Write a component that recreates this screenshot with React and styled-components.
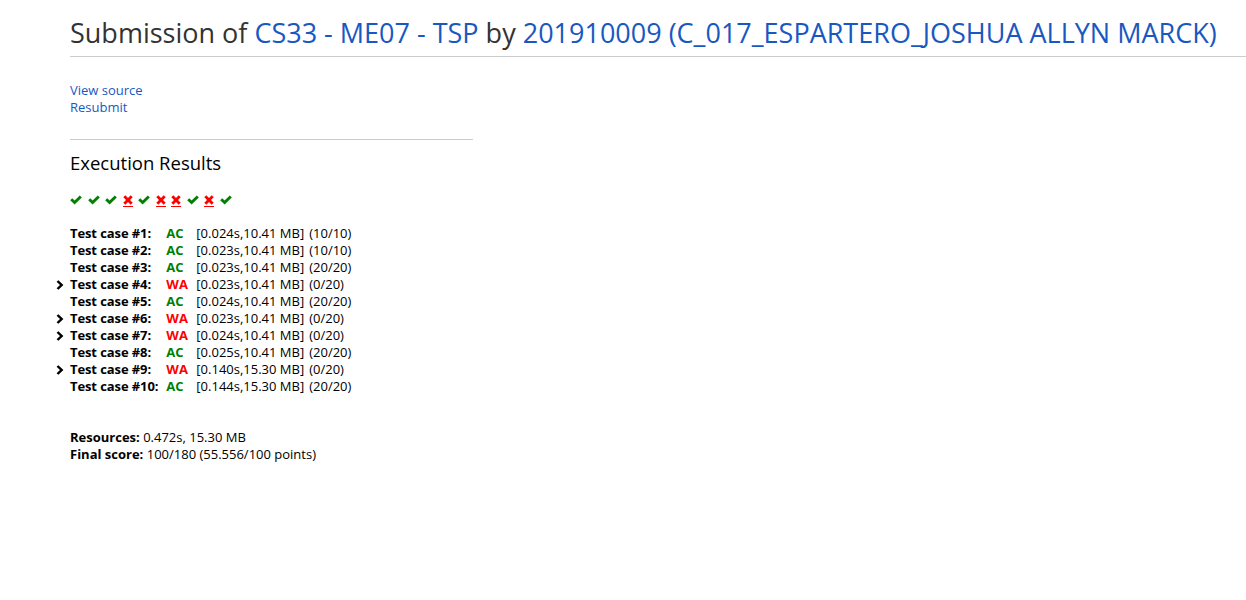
import React from "react";
import styled, { createGlobalStyle } from "styled-components";

const Global = createGlobalStyle`
  html, body { margin: 0; padding: 0; background: #fff; }
  body {
    font-family: "Open Sans", "Noto Sans", sans-serif;
    font-size: 13px;
    color: #000;
  }
  a { color: #1958c1; text-decoration: none; }
`;

const Page = styled.div`
  padding: 14px 0 80px 70px;
`;

const TitleBar = styled.h2`
  margin: 0;
  font-weight: 400;
  font-size: 27px;
  line-height: 38px;
  color: #333;
  padding-bottom: 4px;
  border-bottom: 1px solid #ccc;
  white-space: nowrap;
`;

const Links = styled.div`
  margin-top: 25px;
  display: flex;
  flex-direction: column;
  line-height: 17px;
  font-size: 13px;
`;

const Rule = styled.hr`
  width: 403px;
  margin: 23px 0 0 0;
  border: 0;
  border-top: 1px solid #ccc;
`;

const SectionTitle = styled.h3`
  margin: 10px 0 0 0;
  font-weight: 400;
  font-size: 18.5px;
  line-height: 26px;
  color: #000;
`;

const Marks = styled.div`
  margin-top: 17px;
  display: flex;
  gap: 5.5px;
  height: 16px;
  align-items: center;
`;

const MarkLink = styled.a`
  display: inline-flex;
  flex-direction: column;
  align-items: center;
  border-bottom: ${(p) => (p.$link ? "1px solid #f00" : "1px solid transparent")};
  padding-bottom: 1px;
`;

const Cases = styled.table`
  margin-top: 16px;
  border-collapse: collapse;
  line-height: 17px;
  td { padding: 0; white-space: nowrap; vertical-align: middle; }
`;

const Label = styled.td`
  font-weight: 700;
  letter-spacing: -0.1px;
  position: relative;
  padding-right: 8px !important;
`;

const Chevron = styled.span`
  position: absolute;
  left: -14px;
  top: 4px;
  display: inline-flex;
`;

const Verdict = styled.td`
  font-weight: 700;
  color: ${(p) => (p.$ok ? "#008000" : "#f00")};
  width: 30px;
`;

const Time = styled.td``;
const Mem = styled.td`
  padding-right: 5px !important;
`;

const Summary = styled.div`
  margin-top: 34px;
  line-height: 17px;
  b { font-weight: 700; }
`;

const Check = () => (
  <svg width="12" height="10" viewBox="0 0 12 10">
    <path d="M0.2 5.2 L2.2 3.2 L4.6 5.6 L9.8 0.4 L11.8 2.4 L4.6 9.6 Z" fill="#008000" />
  </svg>
);

const Cross = () => (
  <svg width="10" height="10" viewBox="0 0 10 10">
    <path
      d="M0.3 2.3 L2.3 0.3 L5 3 L7.7 0.3 L9.7 2.3 L7 5 L9.7 7.7 L7.7 9.7 L5 7 L2.3 9.7 L0.3 7.7 L3 5 Z"
      fill="#f00"
    />
  </svg>
);

const ChevronIcon = () => (
  <svg width="8" height="10" viewBox="0 0 8 10">
    <path d="M0.6 1.8 L2.4 0.2 L7.4 5 L2.4 9.8 L0.6 8.2 L4 5 Z" fill="#000" />
  </svg>
);

const cases = [
  { ok: true, t: "0.024s", m: "10.41 MB", p: "(10/10)" },
  { ok: true, t: "0.023s", m: "10.41 MB", p: "(10/10)" },
  { ok: true, t: "0.023s", m: "10.41 MB", p: "(20/20)" },
  { ok: false, t: "0.023s", m: "10.41 MB", p: "(0/20)" },
  { ok: true, t: "0.024s", m: "10.41 MB", p: "(20/20)" },
  { ok: false, t: "0.023s", m: "10.41 MB", p: "(0/20)" },
  { ok: false, t: "0.024s", m: "10.41 MB", p: "(0/20)" },
  { ok: true, t: "0.025s", m: "10.41 MB", p: "(20/20)" },
  { ok: false, t: "0.140s", m: "15.30 MB", p: "(0/20)" },
  { ok: true, t: "0.144s", m: "15.30 MB", p: "(20/20)" },
];

export default function App() {
  return (
    <>
      <Global />
      <Page>
        <TitleBar>
          Submission of <a href="#">CS33 - ME07 - TSP</a> by{" "}
          <a href="#">201910009 (C_017_ESPARTERO_JOSHUA ALLYN MARCK)</a>
        </TitleBar>
        <Links>
          <a href="#">View source</a>
          <a href="#">Resubmit</a>
        </Links>
        <Rule />
        <SectionTitle>Execution Results</SectionTitle>
        <Marks>
          {cases.map((c, i) => (
            <MarkLink key={i} $link={!c.ok} href="#">
              {c.ok ? <Check /> : <Cross />}
            </MarkLink>
          ))}
        </Marks>
        <Cases>
          <tbody>
            {cases.map((c, i) => (
              <tr key={i}>
                <Label>
                  {!c.ok && (
                    <Chevron>
                      <ChevronIcon />
                    </Chevron>
                  )}
                  Test case #{i + 1}:
                </Label>
                <Verdict $ok={c.ok}>{c.ok ? "AC" : "WA"}</Verdict>
                <Time>[{c.t},</Time>
                <Mem>{c.m}]</Mem>
                <td>{c.p}</td>
              </tr>
            ))}
          </tbody>
        </Cases>
        <Summary>
          <div>
            <b>Resources:</b> 0.472s, 15.30 MB
          </div>
          <div>
            <b>Final score:</b> 100/180 (55.556/100 points)
          </div>
        </Summary>
      </Page>
    </>
  );
}
